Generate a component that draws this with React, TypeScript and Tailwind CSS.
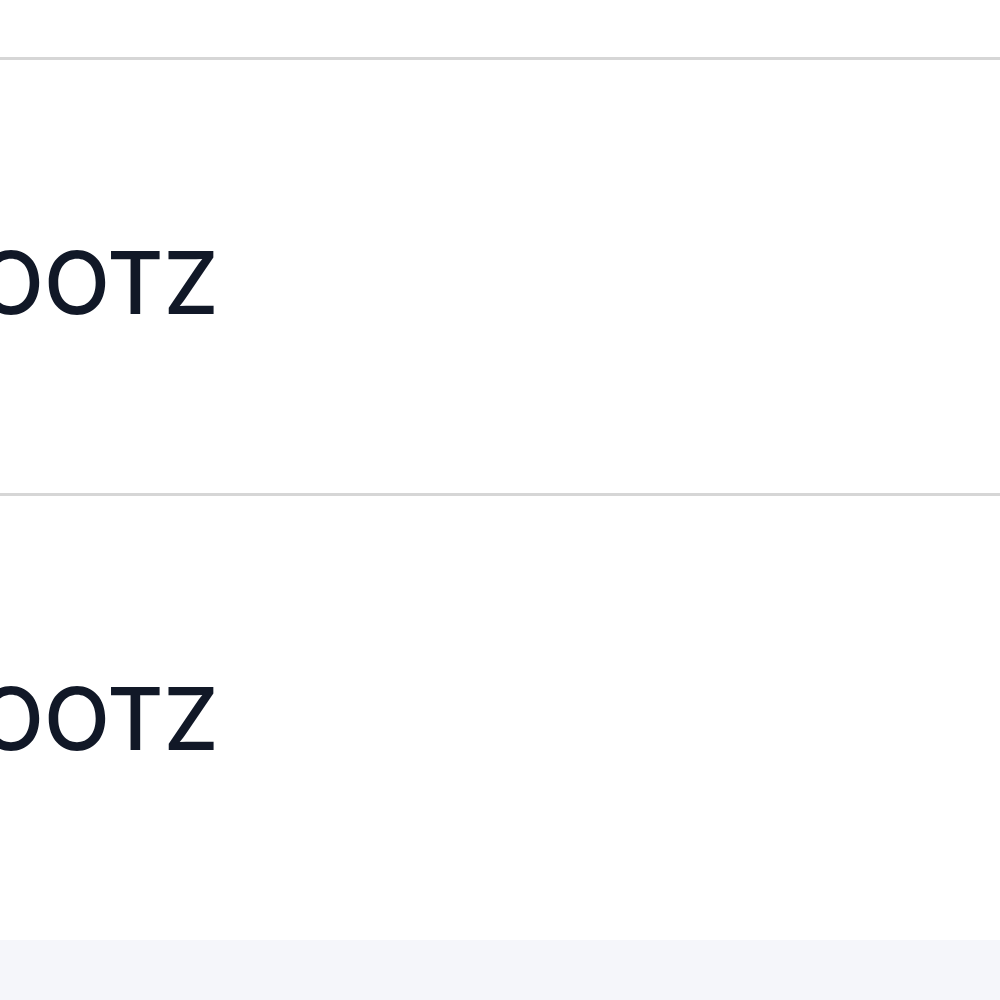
export default function App() {
  const rows = [
    { name: 'OOTZ', h: 'h-[436px]' },
    { name: 'OOTZ', h: 'h-[447px]' },
  ];

  return (
    <div className="min-h-screen w-[1000px] h-[1000px] overflow-hidden bg-[#f5f6fa] font-['Inter','Liberation_Sans',sans-serif]">
      {/* Table body */}
      <div className="bg-white">
        <div className="h-[57px]" />
        {rows.map((row, i) => (
          <div
            key={i}
            className={`border-t-[3px] border-[#d6d6d6] ${row.h} flex items-start pt-[180px] overflow-hidden`}
          >
            <span className="-ml-[22px] text-[86px] leading-none font-medium text-[#111827] whitespace-nowrap">
              {row.name}
            </span>
          </div>
        ))}
      </div>
    </div>
  );
}
